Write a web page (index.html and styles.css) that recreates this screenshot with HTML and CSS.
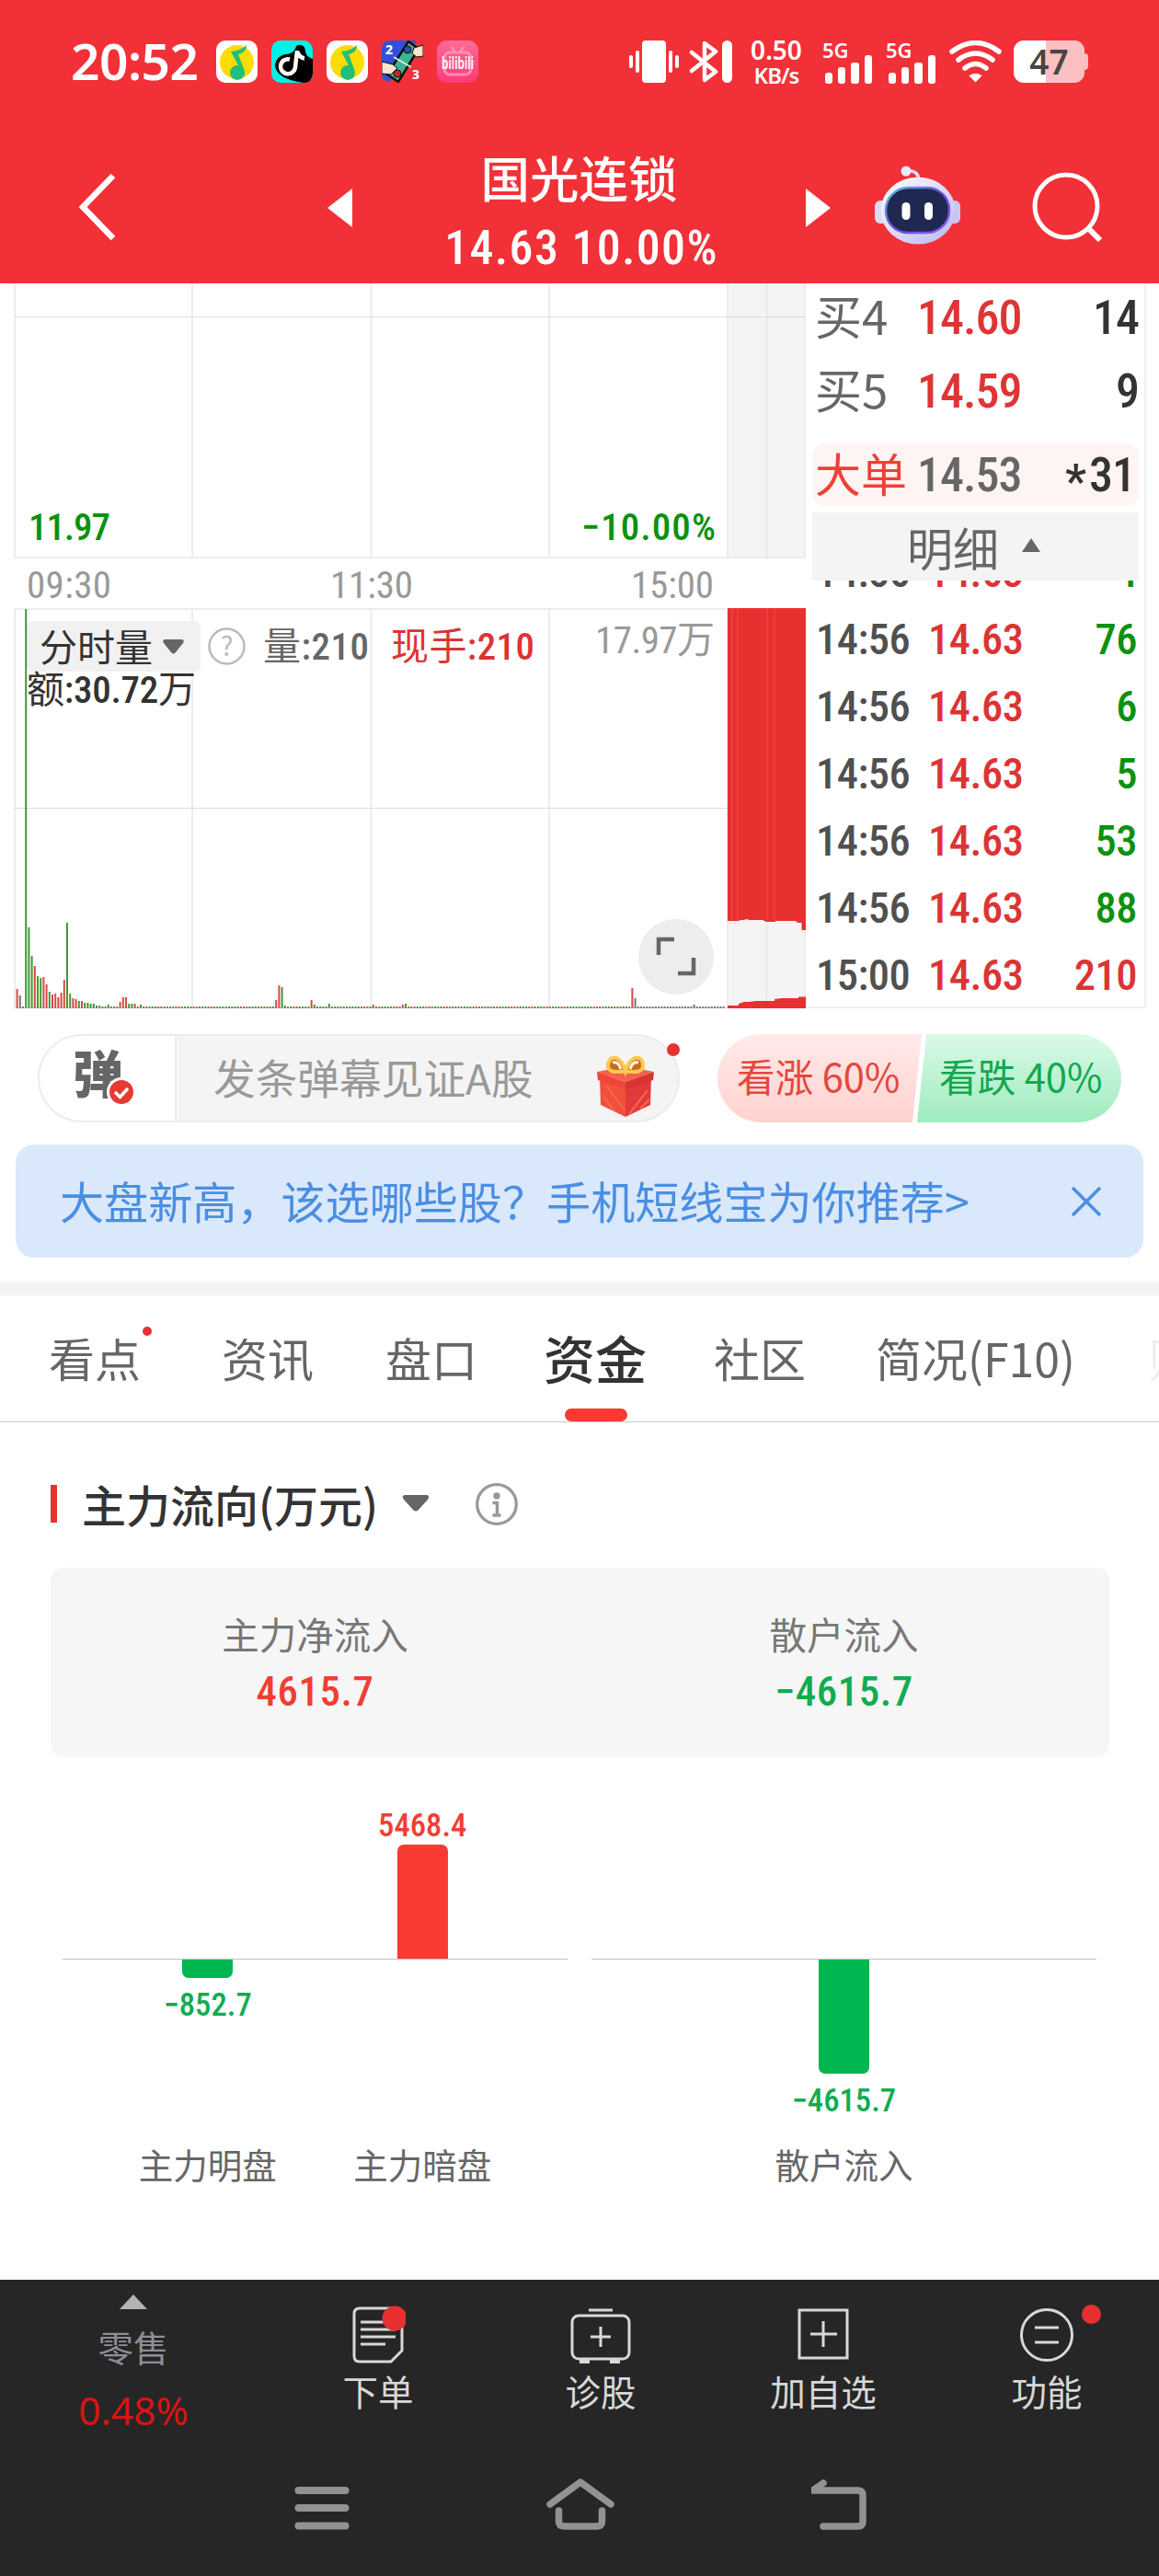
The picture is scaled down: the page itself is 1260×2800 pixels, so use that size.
FILE: index.html
```html
<!DOCTYPE html>
<html lang="zh-CN">
<head>
    <meta charset="UTF-8">
    <meta name="viewport" content="width=device-width, initial-scale=1.0">
    <title>国光连锁 资金</title>
    <link rel="stylesheet" href="styles.css">
</head>
<body>
    <!-- 顶部 -->
    <header class="top">
        <div class="status">
            <span class="clock">20:52</span>
            <div class="apps">
                <svg class="app" viewBox="0 0 45 46">
                    <rect width="45" height="46" rx="10" fill="#fff"/>
                    <circle cx="22.500" cy="23.500" r="18.500" fill="#fddc00"/>
                    <path d="M16 12 Q27 11 33 5 Q33 13 24 15 L30 31 A8 8 0 1 1 24 27 Z" fill="#1fc07a"/>
                </svg>
                <svg class="app" viewBox="0 0 45 46">
                    <rect width="45" height="46" rx="10" fill="#00f0e6"/>
                    <path d="M26 9 Q27 4 32 5 Q37 6 37 12 Q38 18 45 20 V36 Q44 46 35 46 Q20 44 12 39 Q4 34 4 26 Q6 17 15 15 Q23 15 26 9 Z" fill="#000"/>
                    <path d="M28 11 L26 29 A8 8 0 1 1 20 20.500 M28 12 Q31 19 36 19.500" fill="none" stroke="#fff" stroke-width="4.500"/>
                </svg>
                <svg class="app" viewBox="0 0 45 46">
                    <rect width="45" height="46" rx="10" fill="#fff"/>
                    <circle cx="22.500" cy="23.500" r="18.500" fill="#fddc00"/>
                    <path d="M16 12 Q27 11 33 5 Q33 13 24 15 L30 31 A8 8 0 1 1 24 27 Z" fill="#1fc07a"/>
                </svg>
                <svg class="app" viewBox="0 0 45 46">
                    <rect width="45" height="46" rx="10" fill="#f0303a"/>
                    <path d="M10 0 H38 L8 45 Q0 44 0 36 V10 Q0 0 10 0 Z" fill="#3450d8"/>
                    <path d="M29 1 L40 9 L18 45 L6 37 Z" fill="#3fb491" stroke="#111" stroke-width="2.500"/>
                    <path d="M13 18 L32 29" stroke="#d8f5e5" stroke-width="1.500"/>
                    <circle cx="28" cy="10" r="4" fill="#2554a8" stroke="#111"/>
                    <circle cx="17" cy="36" r="4" fill="#c62828" stroke="#111"/>
                    <path d="M45 5 L35 8 L33 14 L38 18 L45 17 Z M0 23 L12 26 L17 30 L10 37 L0 36 Z" fill="#ffe3cf" stroke="#111"/>
                    <text class="game-no" x="4" y="15">2</text>
                    <text class="game-no" x="33" y="42">3</text>
                </svg>
                <svg class="app" viewBox="0 0 45 46">
                    <defs>
                        <linearGradient id="bili" x1="0" y1="0" x2="0" y2="1">
                            <stop offset="0" stop-color="#ff6a94"/>
                            <stop offset="1" stop-color="#fb3b7d"/>
                        </linearGradient>
                    </defs>
                    <rect width="45" height="46" rx="11" fill="url(#bili)"/>
                    <rect x="8" y="13" width="29" height="24" rx="6" fill="none" stroke="#ff8fb0" stroke-width="3"/>
                    <path d="M16 7 L20 13 M29 7 L25 13" stroke="#ff8fb0" stroke-width="3"/>
                    <text class="bili-name" x="5" y="31" textLength="35" lengthAdjust="spacingAndGlyphs">bilibili</text>
                </svg>
            </div>

            <div class="signals">
                <svg width="112" height="46" viewBox="0 0 112 46" fill="#fff">
                    <rect x="14" y="0" width="26" height="46" rx="4"/>
                    <rect x="0" y="16" width="4" height="14" rx="2"/>
                    <rect x="7" y="11" width="4" height="24" rx="2"/>
                    <rect x="43" y="11" width="4" height="24" rx="2"/>
                    <rect x="50" y="16" width="4" height="14" rx="2"/>
                    <path d="M68 13 L94 34 L82 43 V3 L94 12 L68 33" fill="none" stroke="#fff" stroke-width="4.500" stroke-linecap="round" stroke-linejoin="round"/>
                    <rect x="101" y="0" width="11" height="46" rx="5.500"/>
                </svg>
                <div class="speed"><span>0.50</span><span class="unit">KB/s</span></div>
                <div class="cell">
                    <span>5G</span>
                    <svg width="52" height="31" viewBox="0 0 52 31" fill="#fff">
                        <rect x="0" y="19" width="8" height="12" rx="3"/>
                        <rect x="14" y="13" width="8" height="18" rx="3"/>
                        <rect x="28" y="8" width="9" height="23" rx="3"/>
                        <rect x="43" y="0" width="8" height="31" rx="3"/>
                    </svg>
                </div>
                <div class="cell">
                    <span>5G</span>
                    <svg width="52" height="31" viewBox="0 0 52 31" fill="#fff">
                        <rect x="0" y="19" width="8" height="12" rx="3"/>
                        <rect x="14" y="13" width="8" height="18" rx="3"/>
                        <rect x="28" y="8" width="9" height="23" rx="3"/>
                        <rect x="43" y="0" width="8" height="31" rx="3"/>
                    </svg>
                </div>
                <svg class="wifi" width="57" height="46" viewBox="0 0 57 46" fill="none" stroke="#fff" stroke-width="5.500" stroke-linecap="round">
                    <path d="M3 12 Q28.500 -7 54 12"/>
                    <path d="M10 21 Q28.500 7 47 21"/>
                    <path d="M17 30 Q28.500 21 40 30"/>
                    <path d="M23 38.500 Q28.500 35 34 38.500 L28.500 44 Z" fill="#fff" stroke-width="2"/>
                </svg>
                <div class="battery"><span>47</span></div>
            </div>
        </div>

        <div class="nav">
            <svg class="back" width="44" height="76" viewBox="0 0 44 76">
                <path d="M37 3 L4 37 L37 71" fill="none" stroke="#fff" stroke-width="6.500"/>
            </svg>
            <svg width="27" height="42" viewBox="0 0 27 42"><path d="M27 0 V42 L0 21 Z" fill="#fff"/></svg>
            <div class="title">
                <h1>国光连锁</h1>
                <div class="quote">14.63 10.00%</div>
            </div>
            <svg width="27" height="42" viewBox="0 0 27 42"><path d="M0 0 V42 L27 21 Z" fill="#fff"/></svg>
            <svg class="robot" width="94" height="86" viewBox="0 0 94 86">
                <defs>
                    <linearGradient id="shell" x1="0" y1="0" x2="1" y2="1">
                        <stop offset="0" stop-color="#fff"/>
                        <stop offset="1" stop-color="#b9b8ef"/>
                    </linearGradient>
                    <linearGradient id="rim" x1="0" y1="0" x2="1" y2="1">
                        <stop offset="0" stop-color="#5fc8e6"/>
                        <stop offset="0.500" stop-color="#6a46e0"/>
                        <stop offset="1" stop-color="#8f5cf0"/>
                    </linearGradient>
                </defs>
                <path d="M34 6 Q47 4 48 16" fill="none" stroke="#e4e2f6" stroke-width="3.500"/>
                <circle cx="34" cy="6" r="5.500" fill="#eceaf8"/>
                <rect x="0" y="38" width="14" height="25" rx="6" fill="#dcdaf5"/>
                <rect x="79" y="38" width="14" height="25" rx="6" fill="#c9c7f2"/>
                <ellipse cx="47" cy="49" rx="40.500" ry="36.500" fill="url(#shell)"/>
                <rect x="12" y="24" width="69" height="49" rx="24" fill="#1f2850" stroke="url(#rim)" stroke-width="2.500"/>
                <rect x="29.500" y="40" width="9" height="19" rx="4.500" fill="#fff"/>
                <rect x="54" y="40" width="9" height="19" rx="4.500" fill="#fff"/>
            </svg>
            <svg class="search" width="78" height="78" viewBox="0 0 78 78" fill="none" stroke="#fff" stroke-width="5">
                <circle cx="37" cy="37" r="34"/>
                <path d="M61 61 L74 74" stroke-width="6"/>
            </svg>
        </div>
    </header>

    <!-- 分时图 + 五档盘口 -->
    <section class="market">
        <svg class="chart" width="876" height="790" viewBox="0 308 876 790">
            <rect x="791" y="308" width="85" height="299" fill="#f4f4f4"/>
            <rect x="791" y="662" width="85" height="434" fill="#f4f4f4"/>
            <g stroke="#ececec" stroke-width="2">
                <path d="M16 308 V607 M209 308 V607 M403.500 308 V607 M597 308 V607 M791 308 V607 M875 308 V607"/>
                <path d="M15 606 H876 M15 662 H876"/>
                <path d="M16 662 V1096 M209 662 V1096 M403.500 662 V1096 M597 662 V1096 M791 662 V1096 M875 662 V1096"/>
            </g>
            <g stroke="#dcdcdc" stroke-width="1">
                <path d="M16 344.500 H876 M16 878.500 H791 M833.500 308 V607 M833.500 662 V1096 M16 1095.500 H876"/>
            </g>
            <rect x="29" y="675" width="189" height="55" rx="6" fill="#f1f1f1"/>
            <g id="volume"></g>
            <path d="M791 661 H876 V1011 H871.500 V1003 L867 1003 L865 1001 H843 V1002 H833 L829 1000 H815 L811 999 L809 1000 H805 L803 1001 H791 Z" fill="#e83030"/>
            <path d="M791 1096 V1093 H803 V1091 L809 1089 H814 L822 1088 H842 V1086 L850 1085 H868 V1083.500 H876 V1096 Z" fill="#e83030"/>
            <path d="M796 661 V1001 M802 661 V1001 M834 661 V1001 M842 661 V1001" stroke="#f04a48" stroke-width="1"/>

            <g class="num" font-size="41">
                <text x="31" y="587" fill="#0c9110" textLength="89">11.97</text>
                <text x="632" y="587" fill="#0c9110" textLength="146">−10.00%</text>
            </g>
            <g class="num thin" font-size="41" fill="#999">
                <text x="29" y="650" textLength="92">09:30</text>
                <text x="359" y="650" textLength="90">11:30</text>
                <text x="686" y="650" textLength="90">15:00</text>
                <text x="647" y="710" textLength="130">17.97万</text>
            </g>
            <text class="cn" x="43" y="719" font-size="41" fill="#333">分时量</text>
            <path d="M179 695 H198 Q201 696 199 699 L191 709 Q188.500 712 186 709 L178 699 Q176 696 179 695 Z" fill="#666"/>
            <circle cx="246.500" cy="702.500" r="19" fill="none" stroke="#bbb" stroke-width="2.500"/>
            <text class="cn" x="246.500" y="713" font-size="29" fill="#bbb" text-anchor="middle">?</text>
            <g class="num mixed" font-size="41">
                <text x="286" y="717" fill="#666" textLength="115"><tspan class="cn">量</tspan>:210</text>
                <text x="425" y="717" fill="#dc3434" textLength="156"><tspan class="cn">现手</tspan>:210</text>
                <text x="29" y="764" fill="#333" textLength="184"><tspan class="cn">额</tspan>:30.72<tspan class="cn">万</tspan></text>
            </g>

            <circle cx="735" cy="1040" r="41" fill="#ededed"/>
            <path d="M716 1038 V1021 H733 M754 1041 V1058 H737" fill="none" stroke="#666" stroke-width="4.500"/>
        </svg>

        <div class="book">
            <div class="row"><span class="label">买4</span><span class="num price">14.60</span><span class="num qty">14</span></div>
            <div class="row"><span class="label">买5</span><span class="num price">14.59</span><span class="num qty">9</span></div>
            <div class="row big"><span class="label">大单</span><span class="num price">14.53</span><span class="num qty"><i>*</i>31</span></div>
            <div class="detail">
                明细
                <svg width="20" height="15" viewBox="0 0 20 15"><path d="M10 0 L20 15 H0 Z" fill="#666"/></svg>
            </div>
            <div class="ticks num">
                <div class="tick"><span>14:56</span><b>14.63</b><em class="down">4</em></div>
                <div class="tick"><span>14:56</span><b>14.63</b><em class="down">76</em></div>
                <div class="tick"><span>14:56</span><b>14.63</b><em class="down">6</em></div>
                <div class="tick"><span>14:56</span><b>14.63</b><em class="down">5</em></div>
                <div class="tick"><span>14:56</span><b>14.63</b><em class="down">53</em></div>
                <div class="tick"><span>14:56</span><b>14.63</b><em class="down">88</em></div>
                <div class="tick"><span>15:00</span><b>14.63</b><em class="up">210</em></div>
            </div>
        </div>
    </section>

    <!-- 弹幕和看涨看跌 -->
    <section class="danmu">
        <div class="danmu-box">
            <div class="danmu-switch">
                弹
                <svg class="check" width="32" height="32" viewBox="0 0 32 32">
                    <circle cx="16" cy="16" r="14.500" fill="#e83a30" stroke="#fff" stroke-width="3"/>
                    <path d="M9 16 L14.500 21.500 L23 12" fill="none" stroke="#fff" stroke-width="3.500"/>
                </svg>
            </div>
            <span class="danmu-hint">发条弹幕见证A股</span>
            <svg class="gift" width="64" height="68" viewBox="0 0 64 68">
                <path d="M4 24 L32 34 V67 L5 54 Z" fill="#f0503c"/>
                <path d="M60 24 L32 34 V67 L59 54 Z" fill="#e23a3a"/>
                <path d="M8 45 L20 61 M12 34 L31 60 M56 38 L36 64 M58 48 L48 58" stroke="#f66a4a" stroke-width="2"/>
                <path d="M1 18 L32 12 L63 18 L32 29 Z" fill="#f4604c"/>
                <path d="M1 18 L32 29 V37 L2 27 Z" fill="#ee4636"/>
                <path d="M63 18 L32 29 V37 L62 27 Z" fill="#d93232"/>
                <path d="M32 17 Q12 21 13 10 Q15 1 22 3 Q29 6 32 17 Q35 6 42 3 Q50 1 51 10 Q52 21 32 17 Z" fill="#c96a20" stroke="#ffc94d" stroke-width="4"/>
                <path d="M18 8 Q24 6 27 15 M46 8 Q40 6 37 15" fill="none" stroke="#fff3dc" stroke-width="3"/>
            </svg>
            <i class="dot danmu-dot"></i>
        </div>
        <div class="vote">
            <div class="vote-up">看涨 60%</div>
            <div class="vote-down">看跌 40%</div>
        </div>
    </section>

    <div class="banner">
        <span>大盘新高，该选哪些股？手机短线宝为你推荐&gt;</span>
        <svg width="34" height="34" viewBox="0 0 34 34"><path d="M2 2 L32 32 M32 2 L2 32" stroke="#4a8ee2" stroke-width="3.500"/></svg>
    </div>

    <nav class="tabs">
        <span class="tab first">看点<i class="dot"></i></span>
        <span class="tab">资讯</span>
        <span class="tab">盘口</span>
        <span class="tab active">资金</span>
        <span class="tab">社区</span>
        <span class="tab">简况(F10)</span>
        <span class="tab faded">财务</span>
    </nav>

    <!-- 主力流向 -->
    <main class="flow">
        <div class="flow-head">
            <h2>主力流向(万元)</h2>
            <svg width="30" height="18" viewBox="0 0 30 18"><path d="M3 0 H27 Q31 1 28 5 L18 16 Q15 19 12 16 L2 5 Q-1 1 3 0 Z" fill="#666"/></svg>
            <svg class="info" width="46" height="46" viewBox="0 0 46 46">
                <circle cx="23" cy="23" r="21.300" fill="none" stroke="#999" stroke-width="3.300"/>
                <circle cx="23" cy="14" r="3.700" fill="#999"/>
                <path d="M18.500 21.500 H23.500 V35 M18.500 35 H27.500" fill="none" stroke="#999" stroke-width="3.500"/>
            </svg>
        </div>

        <div class="card">
            <div><p>主力净流入</p><strong class="num red">4615.7</strong></div>
            <div><p>散户流入</p><strong class="num green">−4615.7</strong></div>
        </div>

        <div class="bars">
            <div class="group">
                <div class="col">
                    <div class="above"></div>
                    <div class="below"><div class="bar neg" style="height: 20px"></div><span class="num green">−852.7</span></div>
                    <p>主力明盘</p>
                </div>
                <div class="col">
                    <div class="above"><span class="num red">5468.4</span><div class="bar pos" style="height: 124px"></div></div>
                    <div class="below"></div>
                    <p>主力暗盘</p>
                </div>
            </div>
            <div class="group">
                <div class="col">
                    <div class="above"></div>
                    <div class="below"><div class="bar neg" style="height: 124px"></div><span class="num green">−4615.7</span></div>
                    <p>散户流入</p>
                </div>
            </div>
        </div>
    </main>

    <!-- 底部 -->
    <footer class="bottom">
        <div class="menu">
            <div class="sector">
                <svg width="30" height="16" viewBox="0 0 30 16"><path d="M15 0 L30 16 H0 Z" fill="#b3b3b3"/></svg>
                <span>零售</span>
                <b>0.48%</b>
            </div>
            <div class="item">
                <svg width="60" height="64" viewBox="0 0 60 64" fill="none" stroke="#d8d8d8" stroke-width="3">
                    <path d="M10 4 H50 Q56 4 56 10 V50 L44 62 H10 Q4 62 4 56 V10 Q4 4 10 4 Z"/>
                    <path d="M11 19 H49 M11 27 H49 M11 35 H49 M11 43 H38"/>
                    <circle cx="48" cy="15" r="13.500" fill="#e83030" stroke="none"/>
                </svg>
                <span>下单</span>
            </div>
            <div class="item">
                <svg width="66" height="64" viewBox="0 0 66 64" fill="none" stroke="#d8d8d8" stroke-width="3">
                    <rect x="2" y="12" width="62" height="47" rx="7"/>
                    <path d="M20 6 H46 M22 35 H44 M33 24 V46"/>
                    <path d="M10 61.500 H21 M43 61.500 H54" stroke-width="5"/>
                </svg>
                <span>诊股</span>
            </div>
            <div class="item">
                <svg width="56" height="64" viewBox="0 0 56 64" fill="none" stroke="#d8d8d8" stroke-width="3">
                    <rect x="2" y="6" width="52" height="52"/>
                    <path d="M14 32 H43 M28 18 V46"/>
                </svg>
                <span>加自选</span>
            </div>
            <div class="item">
                <svg width="60" height="64" viewBox="0 0 60 64" fill="none" stroke="#d8d8d8" stroke-width="3">
                    <circle cx="30" cy="33" r="27.500"/>
                    <path d="M17 25 H43 M17 41 H43"/>
                </svg>
                <span>功能</span>
                <i class="dot menu-dot"></i>
            </div>
        </div>
        <div class="keys">
            <svg width="60" height="58" viewBox="0 0 60 58" stroke="#929292" stroke-width="8" stroke-linecap="round">
                <path d="M4.500 14 H55.500 M4.500 33 H55.500 M4.500 52.500 H55.500"/>
            </svg>
            <svg width="74" height="58" viewBox="0 0 74 58" fill="none" stroke="#929292" stroke-width="7.500" stroke-linecap="round" stroke-linejoin="round">
                <path d="M4 29 L37 5 L70 29 M13.500 36 V48 Q14 53 19 53 H55 Q60 53 60.500 48 V36"/>
            </svg>
            <svg width="64" height="58" viewBox="4 0 64 58" fill="none" stroke="#929292" stroke-width="7.500" stroke-linecap="round" stroke-linejoin="round">
                <path d="M17 6 L5.500 14 H54 Q60 14 60 19 V48 Q60 53 54 53 H17"/>
            </svg>
        </div>
    </footer>

    <script>
        // 每分钟成交量: [序号, 高度, 颜色]
        const bars = [
            [0, 21, "r"], [1, 14, "k"], [3, 434, "g"], [4, 88, "g"], [5, 57, "g"],
            [6, 46, "r"], [7, 35, "g"], [8, 33, "g"], [9, 34, "r"], [10, 26, "r"],
            [11, 18, "g"], [12, 15, "r"], [13, 16, "r"], [14, 12, "r"], [15, 17, "r"],
            [16, 31, "r"], [17, 93, "g"], [18, 16, "g"], [19, 11, "r"], [20, 10, "r"],
            [21, 8, "g"], [22, 8, "r"], [23, 6, "g"], [24, 6, "g"], [25, 5, "g"],
            [26, 5, "g"], [27, 3, "g"], [28, 3, "r"], [31, 4, "g"], [35, 7, "r"],
            [36, 12, "r"], [37, 12, "r"], [38, 5, "g"], [39, 5, "g"], [40, 5, "r"],
            [42, 4, "g"], [88, 9, "r"], [89, 25, "r"], [90, 23, "g"], [91, 3, "g"],
            [100, 9, "r"], [101, 4, "g"], [106, 5, "g"], [121, 4, "r"], [131, 4, "r"],
            [132, 5, "g"], [209, 22, "r"], [210, 11, "k"], [230, 4, "k"]
        ];
        const colors = { r: "#d84a48", g: "#3f9a33", k: "#777" };
        const tail = "grkggrgkrg";
        const volume = document.getElementById("volume");
        const map = {};
        bars.forEach(b => map[b[0]] = b);

        for (let i = 0; i < 241; i++) {
            const b = map[i] || [i, 2, i > 210 ? "k" : tail[(i * 7 + (i >> 2)) % 10]];
            const rect = document.createElementNS("http://www.w3.org/2000/svg", "rect");
            rect.setAttribute("x", 17.6 + 3.2 * i);
            rect.setAttribute("y", 1096 - b[1]);
            rect.setAttribute("width", 2);
            rect.setAttribute("height", b[1]);
            rect.setAttribute("fill", colors[b[2]]);
            volume.appendChild(rect);
        }
    </script>
</body>
</html>
```
FILE: styles.css
```css
* {
    box-sizing: border-box;
}
body {
    margin: 0;
    width: 1260px;
    height: 2800px;
    overflow: hidden;
    display: flex;
    flex-direction: column;
    background: #fff;
    color: #333;
    font-family: "Noto Sans CJK SC", sans-serif;
}
svg {
    display: block;
    flex: none;
}
h1, h2, p {
    margin: 0;
    font-weight: 500;
}
i, em {
    font-style: normal;
}
.num {
    font-family: Roboto, "Noto Sans CJK SC", sans-serif;
    font-stretch: 75%;
    font-weight: 500;
}
.thin {
    font-weight: 400;
}
.mixed .cn {
    font-weight: 400;
}
.red {
    color: #f03e34;
}
.green {
    color: #10ac52;
}
.dot {
    border-radius: 50%;
    background: #e83030;
}

/* 顶部 */
.top {
    height: 308px;
    background: #f23037;
    color: #fff;
}
.status {
    display: flex;
    align-items: center;
    height: 134px;
    padding: 0 77px;
}
.clock {
    width: 158px;
    margin-top: -3px;
    font-family: "Noto Sans", sans-serif;
    font-size: 55px;
    font-weight: 600;
    letter-spacing: -0.5px;
}
.apps {
    display: flex;
    gap: 15px;
}
.app {
    width: 45px;
    height: 46px;
}
.game-no {
    font-family: "Noto Sans", sans-serif;
    font-size: 14px;
    font-weight: 800;
    fill: #fff;
}
.bili-name {
    font-family: "Noto Sans", sans-serif;
    font-size: 17px;
    font-weight: 600;
    fill: #fff;
}
.signals {
    display: flex;
    align-items: center;
    margin-left: auto;
}
.speed {
    display: flex;
    flex-direction: column;
    align-items: center;
    width: 62px;
    margin: 2px 19px 0 17px;
    font-family: "Noto Sans", sans-serif;
    font-size: 28px;
    font-weight: 600;
    line-height: 27px;
}
.speed .unit {
    font-size: 24px;
    letter-spacing: -1px;
}
.cell {
    display: flex;
    flex-direction: column;
    width: 69px;
    height: 46px;
    font-family: "Noto Sans", sans-serif;
    font-size: 22px;
    font-weight: 600;
    line-height: 22px;
}
.cell span {
    margin-top: -1px;
}
.cell svg {
    margin: -5px 0 0 3px;
}
.battery {
    display: flex;
    align-items: center;
    justify-content: center;
    width: 77px;
    height: 46px;
    margin: 0 4px 0 13px;
    border-radius: 11px;
    background: linear-gradient(90deg, #fff 46%, #fcc0c2 46%);
    color: #4a4444;
    font-family: "Noto Sans", sans-serif;
    font-size: 37px;
    font-weight: 600;
    line-height: 46px;
    position: relative;
}
.battery::after {
    content: "";
    position: absolute;
    left: 77px;
    top: 14px;
    width: 4px;
    height: 18px;
    border-radius: 0 4px 4px 0;
    background: #fcc0c2;
}
.nav {
    display: grid;
    grid-template-columns: 270px 27px 493px 27px 48px 171px auto;
    align-items: center;
    height: 174px;
    padding-left: 86px;
}
.nav > svg {
    margin-top: 10px;
}
.title {
    padding-top: 22px;
    text-align: center;
}
.title h1 {
    height: 74px;
    font-size: 53.500px;
    line-height: 68px;
}
.quote {
    height: 74px;
    padding-left: 5px;
    font-family: Roboto, sans-serif;
    font-stretch: 75%;
    font-size: 52px;
    font-weight: 500;
    letter-spacing: 1.300px;
    line-height: 76px;
}
.nav .robot {
    grid-column: 6;
    margin-top: 4px;
}

/* 行情 */
.market {
    display: flex;
    height: 790px;
}
.cn {
    font-family: "Noto Sans CJK SC", sans-serif;
}
.book {
    display: flex;
    flex-direction: column;
    width: 370px;
    height: 788px;
    padding: 0 6px 0 7px;
    border-right: 2px solid #eee;
    border-bottom: 2px solid #eee;
}
.row {
    display: grid;
    grid-template-columns: 111px 1fr auto;
    align-items: center;
    height: 80px;
    padding: 0 0 0 3px;
    font-size: 52px;
    line-height: 80px;
}
.row .num {
    padding-top: 1px;
}
.row:first-child {
    margin-top: -3px;
}
.row .label {
    margin-top: -8px;
    color: #666;
    font-size: 51px;
}
.row .price {
    color: #df3434;
    letter-spacing: -1px;
}
.row .qty {
    color: #333;
    letter-spacing: -1px;
}
.big {
    height: 68px;
    margin-top: 17px;
    padding-right: 4px;
    border-radius: 14px;
    background: #fef4f3;
    line-height: 68px;
}
.big .label {
    color: #ee4036;
    font-size: 50px;
}
.big .price {
    color: #666;
}
.big i {
    position: relative;
    top: 7px;
    margin-right: 4px;
}
.detail {
    display: flex;
    align-items: center;
    justify-content: center;
    gap: 25px;
    height: 74px;
    margin-top: 7px;
    padding-right: 4px;
    background: #f4f4f4;
    color: #666;
    font-size: 50px;
    line-height: 74px;
}
.detail svg {
    margin-top: -4px;
}
.ticks {
    display: flex;
    flex-direction: column;
    justify-content: flex-end;
    height: 464px;
    overflow: hidden;
    font-size: 46.500px;
}
.tick {
    display: grid;
    grid-template-columns: 122px 1fr auto;
    flex: none;
    height: 73px;
    padding: 3px 2px 0 4px;
    color: #505050;
    line-height: 73px;
    letter-spacing: -0.5px;
}
.tick b {
    color: #dc3434;
    font-weight: 500;
}
.down {
    color: #0c9110;
}
.up {
    color: #dc3434;
}

/* 弹幕 */
.danmu {
    display: flex;
    justify-content: space-between;
    margin: 26px 41px 0;
}
.danmu-box {
    position: relative;
    display: flex;
    align-items: center;
    width: 698px;
    height: 96px;
    border: 2px solid #ececec;
    border-radius: 48px;
    background: #f4f4f4;
}
.danmu-switch {
    position: relative;
    width: 149px;
    height: 92px;
    padding-left: 36px;
    border-right: 2px solid #ececec;
    border-radius: 46px 0 0 46px;
    background: #fff;
    color: #666;
    font-size: 55px;
    font-weight: 900;
    line-height: 76px;
}
.check {
    position: absolute;
    left: 73px;
    top: 45px;
}
.danmu-hint {
    margin: -4px 0 0 40px;
    color: #999;
    font-size: 45.700px;
}
.gift {
    margin: 18px 25px 0 auto;
}
.danmu-dot {
    position: absolute;
    right: -2px;
    top: 8px;
    width: 14px;
    height: 14px;
}
.vote {
    display: flex;
    width: 439px;
    height: 96px;
    border-radius: 48px;
    overflow: hidden;
    font-size: 41.700px;
    line-height: 91px;
}
.vote-up {
    width: 222px;
    padding-left: 21px;
    background: linear-gradient(#ffebe9, #ffd2cf);
    clip-path: polygon(0 0, 100% 0, 212px 100%, 0 100%);
    color: #e4473d;
}
.vote-down {
    flex: 1;
    margin-left: -5px;
    padding-left: 24px;
    background: linear-gradient(#dbfae8, #9eebbe);
    clip-path: polygon(10px 0, 100% 0, 100% 100%, 0 100%);
    color: #12a84e;
}

/* 广告条 */
.banner {
    display: flex;
    align-items: center;
    justify-content: space-between;
    height: 123px;
    margin: 24px 17px 27px;
    padding: 0 45px 0 48px;
    border-radius: 20px;
    background: #dae8fb;
    color: #4a8ee2;
    font-size: 48.100px;
    line-height: 115px;
}
.banner span {
    margin-top: -3px;
}

/* 标签栏 */
.tabs {
    display: flex;
    gap: 76px;
    height: 152px;
    padding-left: 53px;
    border-top: 14px solid #f4f4f4;
    border-bottom: 1px solid #c8c8c8;
    overflow: hidden;
    color: #666;
    font-size: 50px;
    line-height: 134px;
    white-space: nowrap;
}
.tab {
    position: relative;
}
.first {
    margin-right: 12px;
}
.first .dot {
    position: absolute;
    right: -12px;
    top: 34px;
    width: 10px;
    height: 10px;
}
.tab:nth-child(3) {
    margin-left: 2px;
}
.active {
    color: #333;
    font-size: 56px;
    font-weight: 500;
    margin: 0 -3px 0 -4px;
}
.active::after {
    content: "";
    position: absolute;
    left: 23px;
    bottom: 0;
    width: 68px;
    height: 14px;
    border-radius: 7px;
    background: #f93a32;
}
.faded {
    margin-left: 4px;
    opacity: 0.1;
}

/* 主力流向 */
.flow {
    height: 932px;
    padding: 54px 54px 0 55px;
}
.flow-head {
    display: flex;
    align-items: center;
    height: 68px;
    padding-left: 34px;
    background: linear-gradient(#e5322f, #e5322f) 0 14px / 7px 41px no-repeat;
}
.flow-head h2 {
    margin-right: 26px;
    font-size: 48px;
    line-height: 62px;
}
.info {
    margin: 2px 0 0 50px;
}
.card {
    display: flex;
    height: 206px;
    margin-top: 36px;
    padding: 39px 1px 0 0;
    border-radius: 14px;
    background: #f6f6f6;
    text-align: center;
}
.card div {
    flex: 1;
}
.card p {
    height: 66px;
    color: #777;
    font-size: 40.500px;
    font-weight: 400;
    line-height: 66px;
}
.card strong {
    display: block;
    font-size: 45px;
    line-height: 60px;
    letter-spacing: 0.5px;
}
.bars {
    display: flex;
    gap: 26px;
    margin: 0 14px 0 13px;
}
.group {
    flex: 1;
    display: flex;
    padding: 0 41px;
    background: linear-gradient(#c0c0c0, #c0c0c0) 0 219px / 100% 1px no-repeat;
}
.col {
    flex: 1;
    text-align: center;
}
.col span {
    font-size: 34.700px;
    line-height: 40px;
}
.above {
    display: flex;
    flex-direction: column;
    align-items: center;
    justify-content: flex-end;
    gap: 1px;
    height: 219px;
}
.below {
    display: flex;
    flex-direction: column;
    align-items: center;
    gap: 9px;
    height: 198px;
    padding-top: 1px;
}
.bar {
    width: 55px;
}
.pos {
    border-radius: 7px 7px 0 0;
    background: #f93a32;
}
.neg {
    border-radius: 0 0 7px 7px;
    background: #00b650;
}
.col p {
    color: #666;
    font-size: 37.500px;
    font-weight: 400;
    line-height: 50px;
}

/* 底部 */
.bottom {
    height: 322px;
    background: #262626;
    color: #d8d8d8;
}
.menu {
    display: grid;
    grid-template-columns: 290px 242px 242px 242px 244px;
    height: 190px;
}
.sector {
    display: flex;
    flex-direction: column;
    align-items: center;
    padding-top: 16px;
    color: #8e8e98;
    font-size: 38.500px;
    line-height: 68px;
}
.sector span {
    margin-top: 6px;
}
.sector b {
    margin-top: 2px;
    color: #d81414;
    font-family: "Noto Sans", sans-serif;
    font-size: 42.500px;
    font-weight: 400;
}
.item {
    position: relative;
    display: flex;
    flex-direction: column;
    align-items: center;
    padding-top: 27px;
    font-size: 38.500px;
    line-height: 60px;
}
.item svg {
    margin-bottom: -1px;
}
.menu-dot {
    position: absolute;
    right: 63px;
    top: 27px;
    width: 21px;
    height: 21px;
}
.keys {
    display: flex;
    align-items: center;
    gap: 214px;
    padding: 25px 0 0 320px;
}
```
